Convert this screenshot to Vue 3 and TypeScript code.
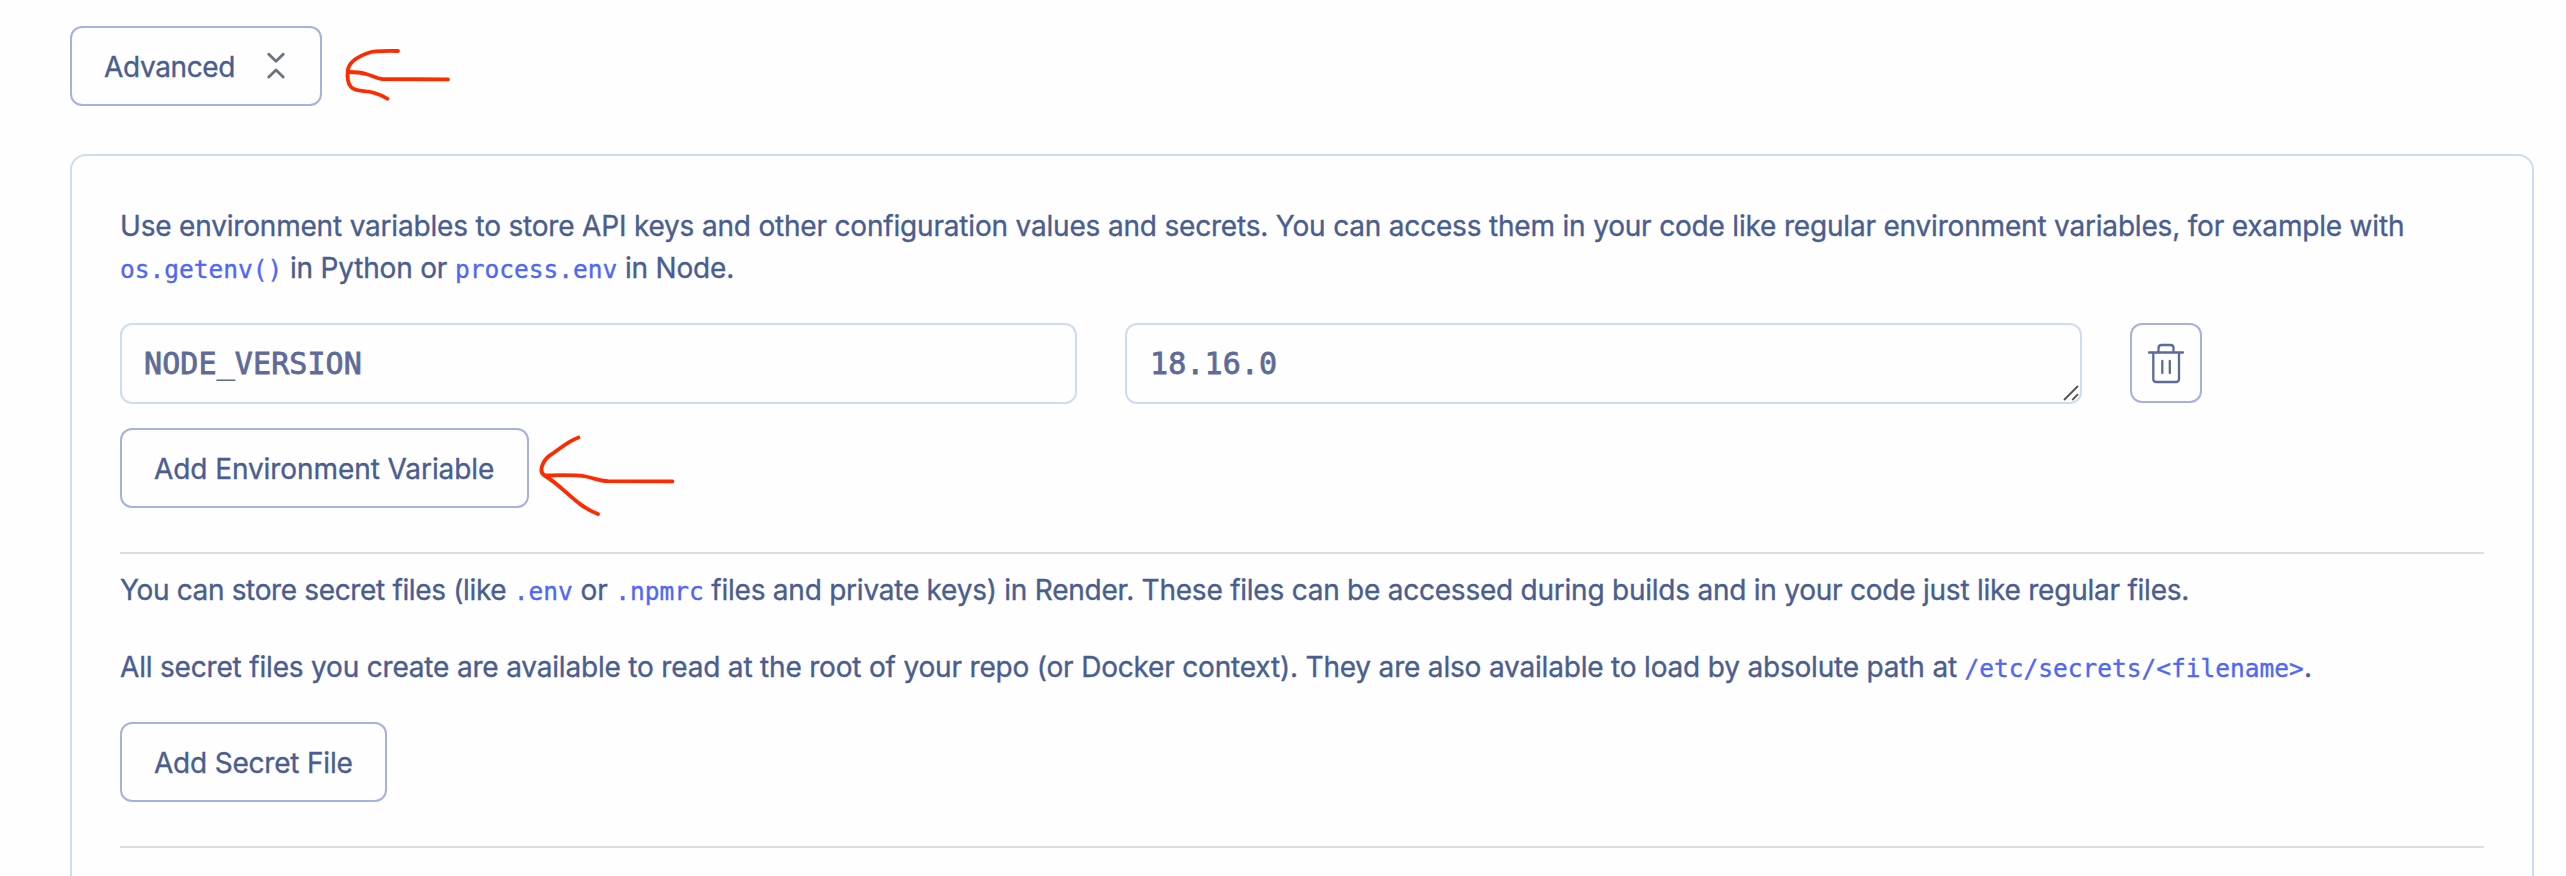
<script setup lang="ts">
import { ref } from 'vue'

const open = ref(true)
const envKey = ref('NODE_VERSION')
const envValue = ref('18.16.0')
</script>

<template>
  <main class="page">
    <div class="top">
      <button class="btn advanced" @click="open = !open">
        <span>Advanced</span>
        <svg class="collapse" width="18" height="28" viewBox="0 0 18 28" fill="none">
          <path d="M1.8 2.2 9 9.2l7.2-7M1.8 25 9 18l7.2 7" />
        </svg>
      </button>
      <svg class="mark mark-top" width="120" height="70" viewBox="340 40 120 70" fill="none">
        <path d="M398 51C388 50.800 374 50.500 368 53C355 57.500 349 64 347.800 70C347 78 347.500 83 351 87C357 93 366 89.500 376 93.500C381 95 385 97 387.500 98.700" />
        <path d="M349 72C355 72 361 72.500 367 74.300C373 76 377 78.700 382 79L448 79.300" />
      </svg>
    </div>

    <section v-if="open" class="panel">
      <p class="text intro">
        <span class="line-a">Use environment variables to store API keys and other configuration values and secrets. You can access them in your code like regular environment variables, for example with</span><br>
        <code>os.getenv()</code> in Python or <code>process.env</code> in Node.
      </p>

      <div class="row">
        <input v-model="envKey" class="field" type="text" spellcheck="false">
        <div class="area">
          <textarea v-model="envValue" class="field" rows="1" spellcheck="false"></textarea>
          <svg class="grip" width="18" height="18" viewBox="0 0 18 18"><path d="M2 16 16 2M10.300 16 16 10.200" /></svg>
        </div>
        <button class="btn trash" aria-label="Delete">
          <svg width="38" height="42" viewBox="0 0 38 42" fill="none">
            <path d="M2 10.500h34M11.500 10.500V6Q11.500 3 14.500 3H23.500Q26.500 3 26.500 6V10.500M6.300 10.500V37Q6.300 40 9.300 40H29Q32 40 32 37V10.500M15.300 19v12M22.800 19v12" />
          </svg>
        </button>
      </div>

      <div class="add-env">
        <button class="btn env">Add Environment Variable</button>
        <svg class="mark mark-env" width="150" height="90" viewBox="535 430 150 90" fill="none">
          <path d="M578.500 437.500C568 441 560 449 549 456C542 462 538.500 472 544.500 475.500C564 487 576 506 598 514" />
          <path d="M545 475.500C560 475.200 575 474.500 586 476.500C595 478.500 600 481 608 481.200L672.500 481.300" />
        </svg>
      </div>

      <hr class="rule">

      <p class="text secret-a"><span class="tight">You can store secret files (like </span><code>.env</code> or <code>.npmrc</code><span class="line-b"> files and private keys) in Render. These files can be accessed during builds and in your code just like regular files.</span></p>
      <p class="text secret-b">All secret files you create are available to read at the root of your repo (or Docker context). They are also available to load by absolute path at <code>/etc/secrets/&lt;filename&gt;</code>.</p>

      <button class="btn file">Add Secret File</button>
      <hr class="rule">
    </section>
  </main>
</template>

<style>
body {
  background: #fefefe;
}
</style>

<style scoped>
.page {
  box-sizing: border-box;
  height: 876px;
  padding: 26px 32px 0 70px;
  overflow: hidden;
  color: #4a5d8f;
  font-family: Inter, "Liberation Sans", sans-serif;
  font-size: 28px;
  -webkit-text-stroke: 0.35px currentColor;
}

.top,
.add-env {
  position: relative;
}

.top {
  height: 80px;
}

.btn {
  display: flex;
  box-sizing: border-box;
  align-items: center;
  height: 80px;
  margin: 0;
  padding: 2px 32px 0;
  border: 2px solid #a7b1d9;
  border-radius: 12px;
  background: transparent;
  color: inherit;
  font: inherit;
  white-space: nowrap;
}

.advanced {
  justify-content: space-between;
  width: 252px;
  padding: 2px 35px 0 32px;
  letter-spacing: -0.35px;
}

.collapse {
  margin-bottom: 2px;
}

.collapse path {
  stroke: #69737d;
  stroke-width: 2.8;
  stroke-linecap: round;
  stroke-linejoin: round;
}

.mark {
  position: absolute;
  pointer-events: none;
}

.mark path {
  stroke: #ff2a00;
  stroke-width: 3.8;
  stroke-linecap: round;
  stroke-linejoin: round;
}

.mark-top {
  top: 14px;
  left: 270px;
}

.mark-env {
  top: 2px;
  left: 415px;
}

.panel {
  box-sizing: border-box;
  height: 800px;
  margin-top: 48px;
  padding: 49px 48px 0;
  border: 2px solid #cfdbf0;
  border-radius: 16px;
}

.text {
  margin: 0;
  line-height: 42px;
  letter-spacing: -0.185px;
  white-space: nowrap;
}

.line-a {
  letter-spacing: -0.187px;
}

.line-b {
  letter-spacing: -0.235px;
}

.tight {
  letter-spacing: -0.35px;
}

code {
  color: #4f66f7;
  font-family: "DejaVu Sans Mono", monospace;
  font-size: 24.5px;
  line-height: 1;
  letter-spacing: 0;
}

.row {
  display: grid;
  grid-template-columns: 957px 957px 72px;
  gap: 48px;
  margin-top: 34px;
}

.field {
  display: block;
  box-sizing: border-box;
  width: 100%;
  height: 81px;
  margin: 0;
  padding: 20px 22px;
  border: 2px solid #cfdbf0;
  border-radius: 12px;
  outline: none;
  background: transparent;
  color: #5e6b98;
  font: 30px/37px "DejaVu Sans Mono", monospace;
  letter-spacing: 0.1px;
  -webkit-text-stroke: 0.8px currentColor;
  resize: none;
  overflow: hidden;
}

.area {
  position: relative;
}

.area .field {
  padding-left: 23px;
}

.grip {
  position: absolute;
  right: 2px;
  bottom: 2px;
}

.grip path {
  stroke: #555;
  stroke-width: 1.8;
}

.trash {
  justify-content: center;
  padding: 0;
}

.trash path {
  stroke: #5d6b99;
  stroke-width: 2.3;
  stroke-linecap: round;
}

.add-env {
  margin-top: 24px;
}

.env {
  width: 409px;
  letter-spacing: -0.08px;
}

.rule {
  height: 2px;
  margin: 44px 0 0;
  border: 0;
  background: #dedede;
}

.secret-a {
  margin-top: 15px;
}

.secret-b {
  margin-top: 35px;
}

.file {
  width: 267px;
  margin-top: 34px;
  letter-spacing: -0.2px;
}
</style>
